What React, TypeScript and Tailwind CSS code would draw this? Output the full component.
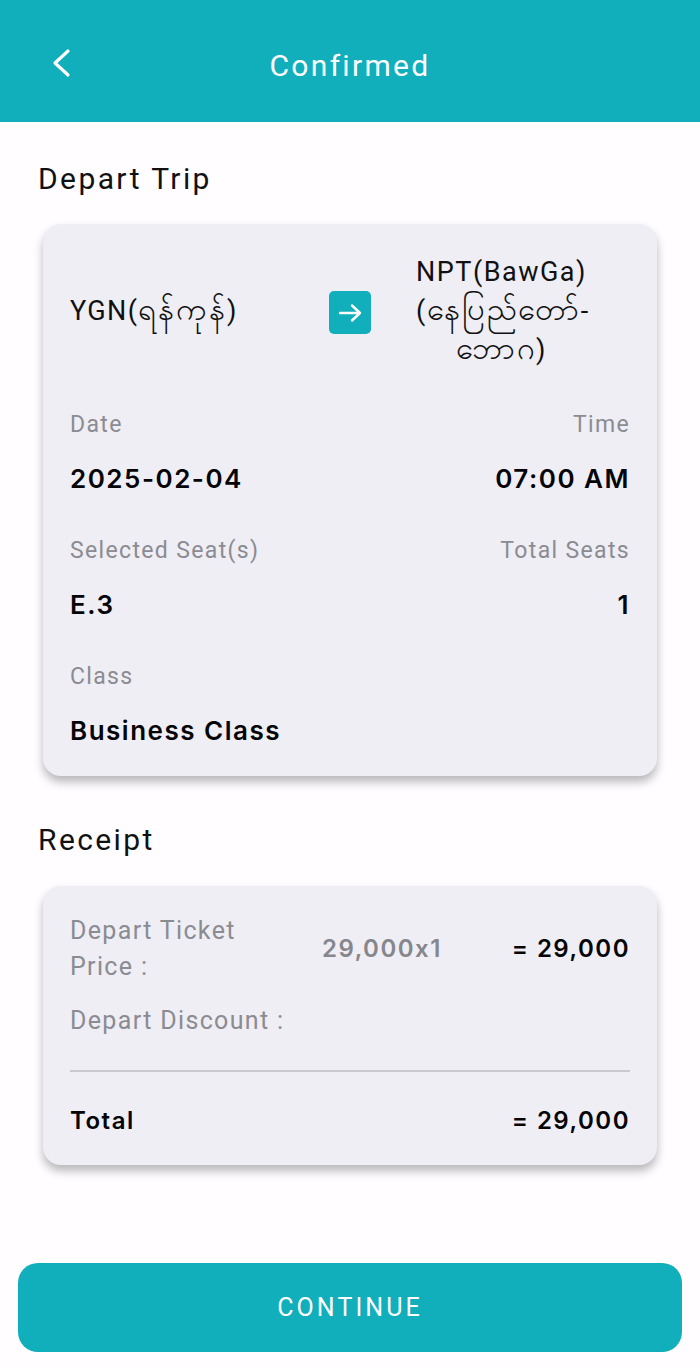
function Label({ children }: { children: React.ReactNode }) {
  return <div className="text-[23px] leading-[36px] tracking-[1.35px] text-[#8b8b92]">{children}</div>;
}
function BigLabel({ children }: { children: React.ReactNode }) {
  return <div className="text-[25px] leading-[36px] tracking-[1.35px] text-[#8b8b92]">{children}</div>;
}
function Value({ children }: { children: React.ReactNode }) {
  return <div className="font-['Inter',sans-serif] text-[26px] leading-[36px] font-semibold tracking-[1.5px] text-[#050508]">{children}</div>;
}
function Pair({ a, b, c, d }: { a: string; b?: string; c: string; d?: string }) {
  return (
    <div className="flex justify-between">
      <div><Label>{a}</Label><div className="mt-[18px]"><Value>{c}</Value></div></div>
      {b && <div className="text-right"><Label>{b}</Label><div className="mt-[18px]"><Value>{d}</Value></div></div>}
    </div>
  );
}
export default function App() {
  return (
    <div className="w-[700px] h-[1368px] bg-[#fffdff] flex flex-col font-['Roboto','Noto_Sans',sans-serif]">
      <header className="h-[122px] bg-[#11aebc] relative flex items-center justify-center">
        <svg className="absolute left-[46px] top-[44px]" width="32" height="38" viewBox="0 0 32 38" fill="none" stroke="#fff" strokeWidth="3.2" strokeLinecap="round" strokeLinejoin="round"><path d="M22 7 L9 19 L22 31" /></svg>
        <h1 className="text-[30px] tracking-[2.3px] text-white mt-[9px]">Confirmed</h1>
      </header>
      <main className="px-[38px] pt-[39px] flex-1">
        <h2 className="text-[30px] leading-[36px] tracking-[2.4px] text-[#111]">Depart Trip</h2>
        <section className="mt-[27px] mx-[5px] h-[552px] w-[614px] rounded-[18px] bg-[#eeeef4] shadow-[0_6px_10px_rgba(0,0,0,0.28)] px-[27px] pt-[26px]">
          <div className="flex items-center h-[120px] text-[#111]">
            <div className="w-[259px] text-[27px] tracking-[1.4px]">YGN(<span className="text-[31px]">ရန်ကုန်</span>)</div>
            <div className="w-[42px] h-[43px] mt-[5px] rounded-[5px] bg-[#11aebc] flex items-center justify-center">
              <svg width="26" height="26" viewBox="0 0 26 26" fill="none" stroke="#fff" strokeWidth="2.4" strokeLinecap="round" strokeLinejoin="round"><path d="M3 13 H23 M15 5.5 L23 13 L15 20.5" /></svg>
            </div>
            <div className="ml-[45px] mt-[2px] w-[200px] text-[27px] leading-[38px] tracking-[1.5px]">
              NPT(BawGa)<br />(<span className="text-[31px]">နေပြည်တော်</span>-<br /><span className="ml-[40px] text-[31px]">ဘောဂ</span>)
            </div>
          </div>
          <div className="mt-[37px] flex flex-col gap-[36px]">
            <Pair a="Date" b="Time" c="2025-02-04" d="07:00 AM" />
            <Pair a="Selected Seat(s)" b="Total Seats" c="E.3" d="1" />
            <Pair a="Class" c="Business Class" />
          </div>
        </section>
        <h2 className="mt-[46px] text-[30px] leading-[36px] tracking-[2.4px] text-[#111]">Receipt</h2>
        <section className="mt-[28px] mx-[5px] h-[279px] w-[614px] rounded-[18px] bg-[#eeeef4] shadow-[0_6px_10px_rgba(0,0,0,0.28)] px-[27px] pt-[27px]">
          <div className="flex items-center">
            <div className="w-[252px]"><BigLabel>Depart Ticket</BigLabel><BigLabel>Price :</BigLabel></div>
            <div className="font-['Inter',sans-serif] text-[24px] font-semibold tracking-[1.5px] text-[#86868c]">29,000x1</div>
            <div className="ml-auto font-['Inter',sans-serif] text-[24px] font-semibold tracking-[1.5px] text-[#050508]">= 29,000</div>
          </div>
          <div className="mt-[18px]"><BigLabel>Depart Discount :</BigLabel></div>
          <div className="mt-[31px] h-[2px] bg-[#c9c9cf]" />
          <div className="mt-[31px] flex justify-between font-['Inter',sans-serif] text-[24px] font-semibold tracking-[1.5px] text-[#050508]"><span>Total</span><span>= 29,000</span></div>
        </section>
      </main>
      <div className="px-[18px] pb-[16px]">
        <button className="w-full h-[89px] rounded-[20px] bg-[#11aebc] text-white text-[25px] tracking-[3.1px]">CONTINUE</button>
      </div>
    </div>
  );
}
